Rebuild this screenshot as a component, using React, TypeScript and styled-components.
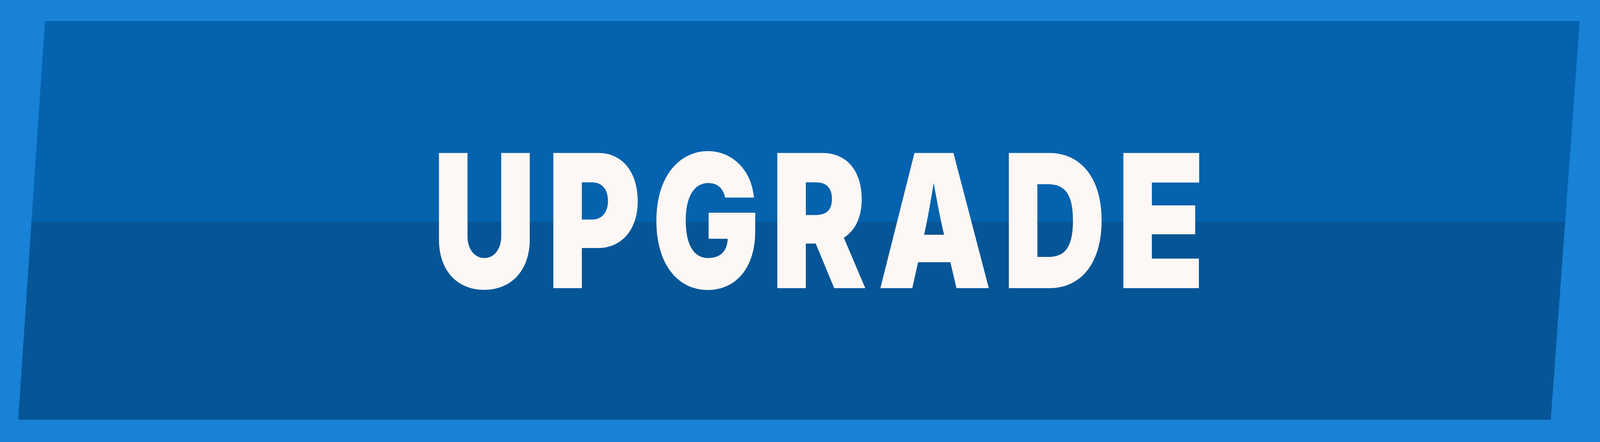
import React, { useLayoutEffect, useState } from "react";
import styled, { createGlobalStyle } from "styled-components";

const DESIGN_W = 5268;
const DESIGN_H = 1132;

const GlobalStyle = createGlobalStyle`
  html, body {
    margin: 0;
    padding: 0;
    background: #1782d6;
    overflow: hidden;
  }
`;

const Viewport = styled.div`
  width: 100vw;
  height: 100vh;
  overflow: hidden;
  background: #1782d6;
`;

const Stage = styled.div`
  box-sizing: border-box;
  width: ${DESIGN_W}px;
  height: ${DESIGN_H}px;
  padding: 54px 67px 57px 60px;
  background: #1782d6;
  display: flex;
  transform-origin: 0 0;
`;

const Banner = styled.button`
  flex: 1;
  min-width: 0;
  border: none;
  margin: 0;
  padding: 0 0 0 163px;
  display: flex;
  align-items: center;
  justify-content: center;
  cursor: pointer;
  background: linear-gradient(
    to bottom,
    #0462ae 0%,
    #0462ae 50.3%,
    #065597 50.3%,
    #065597 100%
  );
  clip-path: polygon(88px 0, 100% 0, calc(100% - 95px) 100%, 0 100%);
`;

const Label = styled.span`
  font-family: "Inter", "Noto Sans", "Liberation Sans", sans-serif;
  font-weight: 900;
  font-size: 476px;
  line-height: 1;
  letter-spacing: 33px;
  color: #fdf7f5;
  text-transform: uppercase;
  white-space: nowrap;
`;

function useFitScale() {
  const [scale, setScale] = useState({ x: 1, y: 1 });
  useLayoutEffect(() => {
    const update = () =>
      setScale({
        x: window.innerWidth / DESIGN_W,
        y: window.innerHeight / DESIGN_H,
      });
    update();
    window.addEventListener("resize", update);
    return () => window.removeEventListener("resize", update);
  }, []);
  return scale;
}

export default function App() {
  const scale = useFitScale();
  return (
    <>
      <GlobalStyle />
      <Viewport>
        <Stage style={{ transform: `scale(${scale.x}, ${scale.y})` }}>
          <Banner type="button">
            <Label>Upgrade</Label>
          </Banner>
        </Stage>
      </Viewport>
    </>
  );
}
